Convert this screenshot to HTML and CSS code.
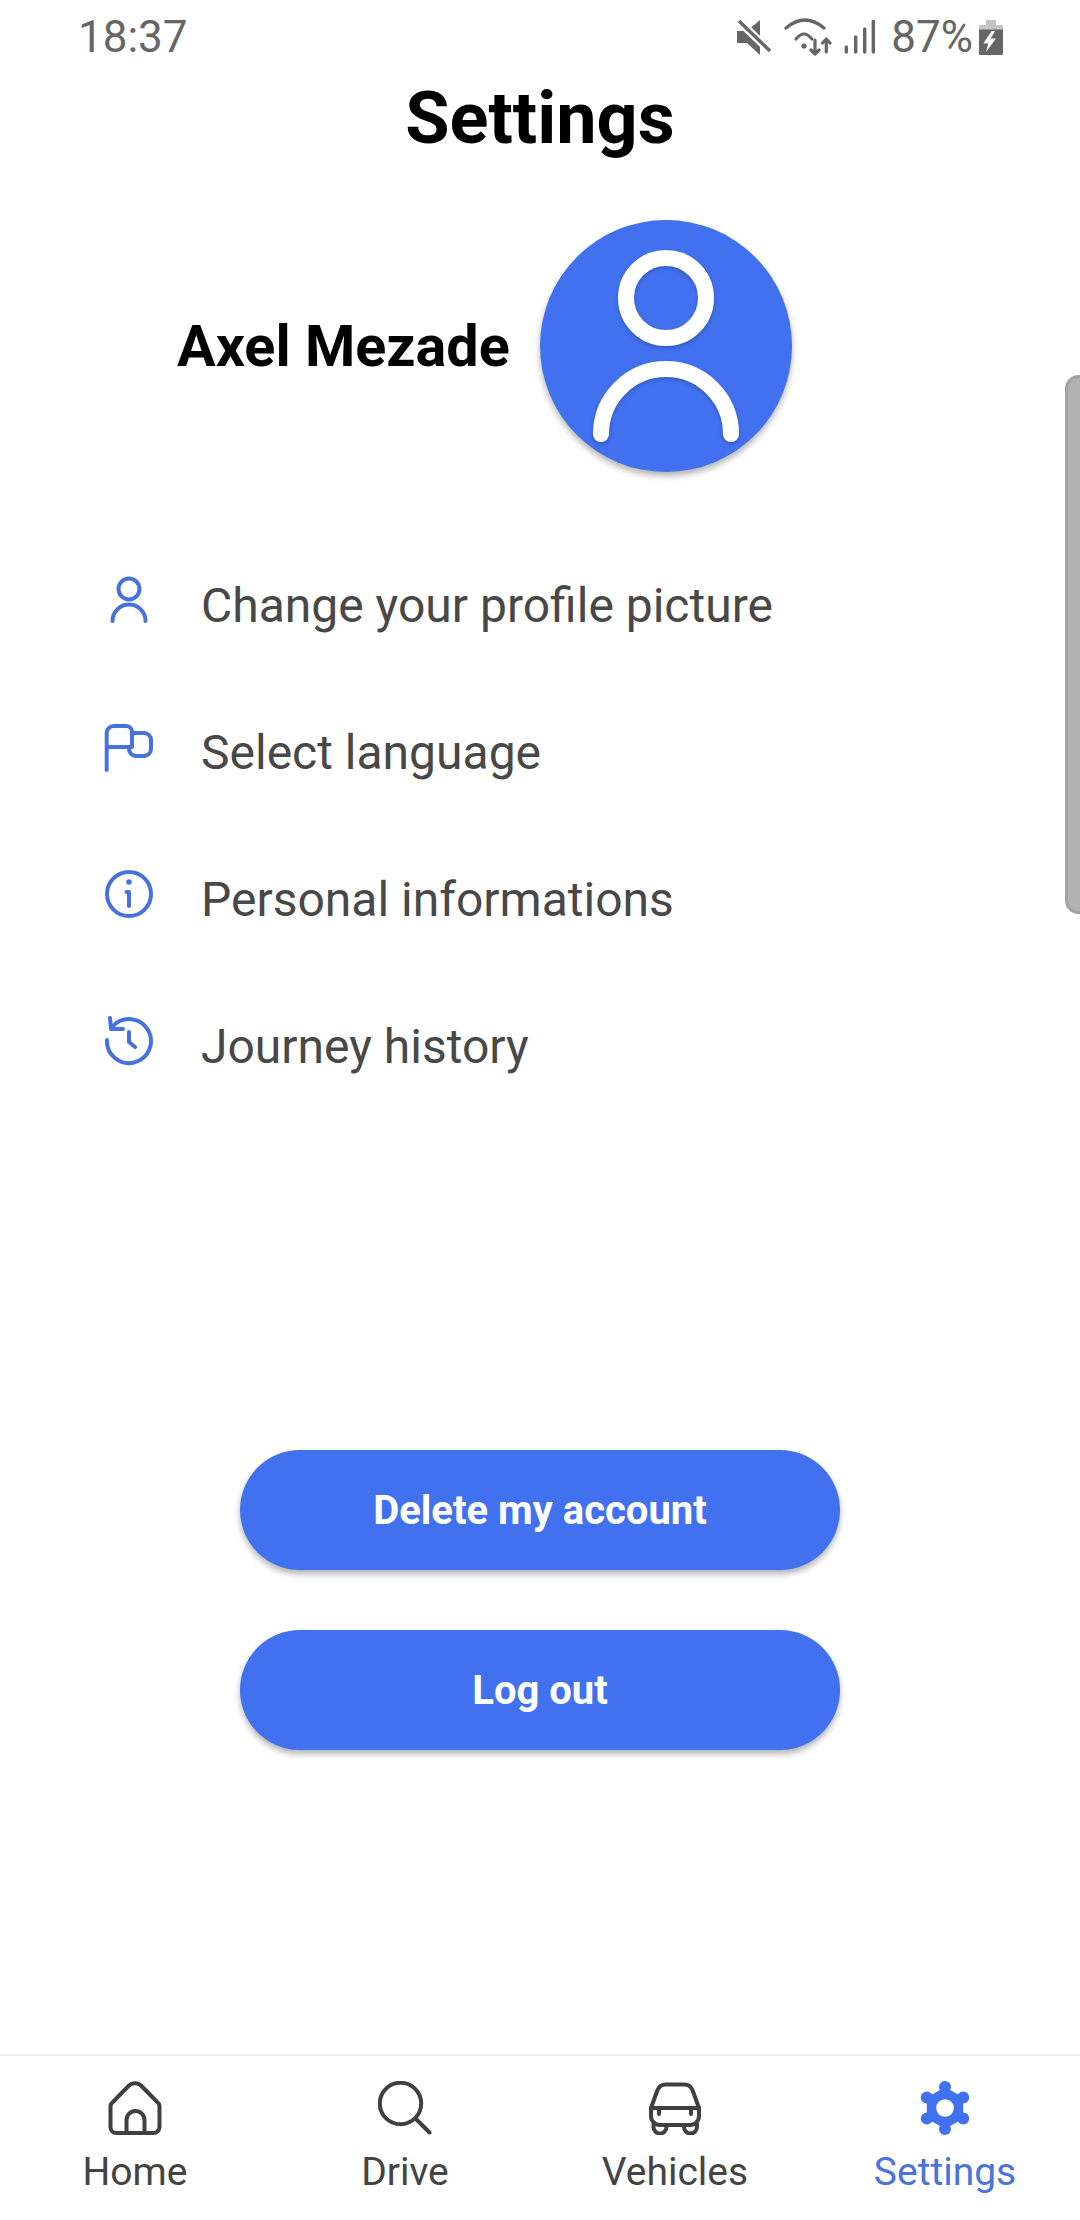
FILE: index.html
```html
<!DOCTYPE html>
<html lang="en">
<head>
    <meta charset="UTF-8">
    <meta name="viewport" content="width=device-width, initial-scale=1.0">
    <title>Settings</title>
    <link rel="stylesheet" href="styles.css">
</head>
<body>
<div class="screen">

    <!-- Status Bar -->
    <header class="status-bar">
        <span class="status-time">18:37</span>
        <div class="status-icons">
            <svg class="ic-mute" width="34" height="38" viewBox="0 0 34 38">
                <path class="solid" d="M0 13H10L23 2V37L10 25H0Z"/>
                <path d="M2 3L33 33" stroke="#fff" stroke-width="8" fill="none"/>
                <path d="M2 3L33 33" stroke="#666" stroke-width="3.4" fill="none"/>
            </svg>
            <svg class="ic-wifi" width="48" height="38" viewBox="0 0 48 38">
                <g fill="none" stroke="#666" stroke-width="3.200" stroke-linecap="round" stroke-linejoin="round">
                    <path d="M2 10Q21 -6 40 10"/>
                    <path d="M12 21Q20 11 28 21"/>
                    <path d="M31 22V36M27 32L31 36L35 32"/>
                    <path d="M42.3 34V22M38.5 25L42.3 21L46 25"/>
                </g>
                <circle class="solid" cx="20" cy="28" r="2.600"/>
            </svg>
            <svg class="ic-signal" width="32" height="34" viewBox="0 0 32 34">
                <path d="M2.3 32V27M11.7 32V17M20.7 32V9M29.3 32V1.5" stroke="#666" stroke-width="3.4" stroke-linecap="round" fill="none"/>
            </svg>
            <span class="status-pct">87%</span>
            <svg class="ic-battery" width="24" height="35" viewBox="0 0 24 35">
                <path d="M7 0H17V5H7Z" fill="#c4c4c4"/>
                <path d="M1.5 5H22.500A1.500 1.500 0 0 1 24 6.500V10H0V6.500A1.500 1.500 0 0 1 1.500 5Z" fill="#c4c4c4"/>
                <path class="solid" d="M0 9.500H24V33.500A1.500 1.500 0 0 1 22.500 35H1.500A1.500 1.500 0 0 1 0 33.500Z"/>
                <path d="M12.700 11L4.300 23.500H9.300L7 32L17 18.500H11.700L16 11Z" fill="#fff"/>
            </svg>
        </div>
    </header>

    <!-- Main Content -->
    <main class="content">
        <h1 class="page-title">Settings</h1>

        <section class="profile">
            <h2 class="profile-name">Axel Mezade</h2>
            <div class="avatar">
                <svg width="252" height="252" viewBox="0 0 252 252">
                    <g class="avatar-figure" fill="none" stroke="#fff" stroke-width="16" stroke-linecap="round">
                        <circle cx="126" cy="78" r="40"/>
                        <path d="M61 214A65 65 0 0 1 191 214"/>
                    </g>
                </svg>
            </div>
        </section>

        <ul class="menu">
            <li class="menu-item">
                <svg class="menu-icon" width="54" height="54" viewBox="0 0 54 54">
                    <circle cx="27" cy="16" r="10.500"/>
                    <path d="M10.500 48A16.500 16.500 0 0 1 43.500 48"/>
                </svg>
                <span>Change your profile picture</span>
            </li>
            <li class="menu-item">
                <svg class="menu-icon" width="54" height="54" viewBox="0 0 54 54">
                    <path d="M4.700 50V13A7 7 0 0 1 11.700 6H24A6 6 0 0 1 30 12V27H4.700"/>
                    <path d="M30 13H42A7 7 0 0 1 49 20V29A7 7 0 0 1 42 36H34A7 7 0 0 1 27 29"/>
                </svg>
                <span>Select language</span>
            </li>
            <li class="menu-item">
                <svg class="menu-icon" width="54" height="54" viewBox="0 0 54 54">
                    <circle cx="27" cy="27" r="22"/>
                    <path d="M24.500 25H27V39"/>
                    <circle class="menu-dot" cx="27" cy="15" r="2.800"/>
                </svg>
                <span>Personal informations</span>
            </li>
            <li class="menu-item">
                <svg class="menu-icon" width="54" height="54" viewBox="0 0 54 54">
                    <path d="M5 26A22 22 0 1 0 11 12"/>
                    <path d="M8 4L9 15H21"/>
                    <path d="M27 18V28L33 33"/>
                </svg>
                <span>Journey history</span>
            </li>
        </ul>

        <div class="actions">
            <button class="btn">Delete my account</button>
            <button class="btn">Log out</button>
        </div>
    </main>

    <!-- Side handle -->
    <div class="side-handle"></div>

    <!-- Bottom Navigation -->
    <nav class="tabs">
        <a class="tab" href="#home">
            <svg class="tab-icon" width="54" height="54" viewBox="0 0 54 54">
                <path d="M2.500 25A4 4 0 0 1 3.700 22.200L20.500 5A9 9 0 0 1 33.500 5L50.300 22.200A4 4 0 0 1 51.500 25V46A6 6 0 0 1 45.500 52H8.500A6 6 0 0 1 2.500 46Z"/>
                <path d="M18.500 52V39A9 9 0 0 1 36.500 39V52"/>
            </svg>
            <span>Home</span>
        </a>
        <a class="tab" href="#drive">
            <svg class="tab-icon" width="54" height="54" viewBox="0 0 54 54">
                <circle cx="22.500" cy="22.500" r="20.700"/>
                <path d="M38 38L51.500 51.500"/>
            </svg>
            <span>Drive</span>
        </a>
        <a class="tab" href="#vehicles">
            <svg class="tab-icon" width="54" height="54" viewBox="0 0 54 54">
                <path d="M3 27L9.500 9A9 9 0 0 1 18 3.500H36A9 9 0 0 1 44.500 9L51 27"/>
                <path d="M3 27H51V35A9 9 0 0 1 42 44H12A9 9 0 0 1 3 35Z"/>
                <path d="M5.500 43V46A6.500 6.500 0 0 0 18.500 46V44M36 44V46A6.500 6.500 0 0 0 49 46V43"/>
                <path d="M11 28V33M43 28V33"/>
            </svg>
            <span>Vehicles</span>
        </a>
        <a class="tab tab-active" href="#settings">
            <svg class="tab-icon" width="54" height="54" viewBox="0 0 54 54">
                <g class="gear">
                    <path d="M27 6L45.200 16.500V37.500L27 48L8.800 37.500V16.500Z"/>
                    <circle cx="27" cy="6" r="6"/>
                    <circle cx="45.200" cy="16.500" r="6"/>
                    <circle cx="45.200" cy="37.500" r="6"/>
                    <circle cx="27" cy="48" r="6"/>
                    <circle cx="8.800" cy="37.500" r="6"/>
                    <circle cx="8.800" cy="16.500" r="6"/>
                </g>
                <circle class="gear-hole" cx="27" cy="27" r="8.800"/>
            </svg>
            <span>Settings</span>
        </a>
    </nav>

</div>
</body>
</html>
```

FILE: styles.css
```css
/* General Styles */
body {
    margin: 0;
    padding: 0;
    background-color: #fff;
    font-family: Roboto, "Liberation Sans", sans-serif;
}

.screen {
    position: relative;
    width: 1080px;
    height: 2220px;
    display: flex;
    flex-direction: column;
    overflow: hidden;
}

.solid {
    fill: #666;
}

/* Status Bar */
.status-bar {
    height: 74px;
    flex: none;
    display: flex;
    justify-content: space-between;
    align-items: center;
    padding: 0 77px 0 78px;
    color: #666;
}

.status-time {
    font-size: 44px;
}

.status-icons {
    display: flex;
    align-items: center;
}

.ic-wifi {
    margin-left: 13px;
}

.ic-signal {
    margin-left: 12px;
}

.status-pct {
    font-size: 44px;
    margin-left: 15px;
}

.ic-battery {
    margin-left: 6px;
}

/* Main Content */
.content {
    flex: 1;
}

.page-title {
    margin: 0;
    height: 80px;
    line-height: 89px;
    text-align: center;
    font-size: 72px;
    font-weight: 700;
    color: #000;
}

.profile {
    display: flex;
    align-items: center;
    padding: 66px 0 0 177px;
}

.profile-name {
    margin: 0 30px 0 0;
    width: 333px;
    white-space: nowrap;
    font-size: 57.500px;
    font-weight: 700;
    color: #000;
}

.avatar {
    width: 252px;
    height: 252px;
    border-radius: 50%;
    background-color: #4271f0;
    box-shadow: 0 4px 6px rgba(0, 0, 0, 0.3);
}

.avatar svg {
    display: block;
}

.avatar-figure {
    filter: drop-shadow(0 2px 2px rgba(0, 0, 0, 0.2));
}

/* Menu */
.menu {
    list-style: none;
    margin: 0;
    padding: 59px 0 0 102px;
}

.menu-item {
    height: 147px;
    display: flex;
    align-items: center;
    font-size: 48px;
    color: #484848;
}

.menu-item span {
    padding-top: 1px;
}

.menu-icon {
    margin: 0 45px 10px 0;
    fill: none;
    stroke: #4771de;
    stroke-width: 4;
    stroke-linecap: round;
    stroke-linejoin: round;
}

.menu-dot {
    fill: #4771de;
    stroke: none;
}

/* Buttons */
.actions {
    display: flex;
    flex-direction: column;
    align-items: center;
    gap: 60px;
    margin-top: 331px;
}

.btn {
    width: 600px;
    height: 120px;
    border: none;
    border-radius: 60px;
    background-color: #4271f0;
    color: #fff;
    font-family: inherit;
    font-size: 40px;
    font-weight: 700;
    box-shadow: 0 4px 6px rgba(0, 0, 0, 0.3);
}

/* Side handle */
.side-handle {
    position: absolute;
    top: 375px;
    right: -12px;
    width: 27px;
    height: 539px;
    box-sizing: border-box;
    border: 3px solid #a2a2a2;
    border-radius: 15px;
    background-color: #b2b2b2;
}

/* Bottom Navigation */
.tabs {
    height: 166px;
    flex: none;
    display: grid;
    grid-template-columns: repeat(4, 1fr);
    border-top: 2px solid #f0f0f0;
    box-sizing: border-box;
}

.tab {
    display: flex;
    flex-direction: column;
    align-items: center;
    padding-top: 25px;
    color: #444;
    font-size: 39px;
    text-decoration: none;
}

.tab span {
    line-height: 44px;
    margin-top: 15px;
}

.tab-icon {
    fill: none;
    stroke: #404040;
    stroke-width: 4;
    stroke-linecap: round;
    stroke-linejoin: round;
}

.tab-active {
    color: #4a74dc;
}

.gear {
    fill: #4271f0;
    stroke: none;
}

.gear-hole {
    fill: #fff;
    stroke: none;
}
```
